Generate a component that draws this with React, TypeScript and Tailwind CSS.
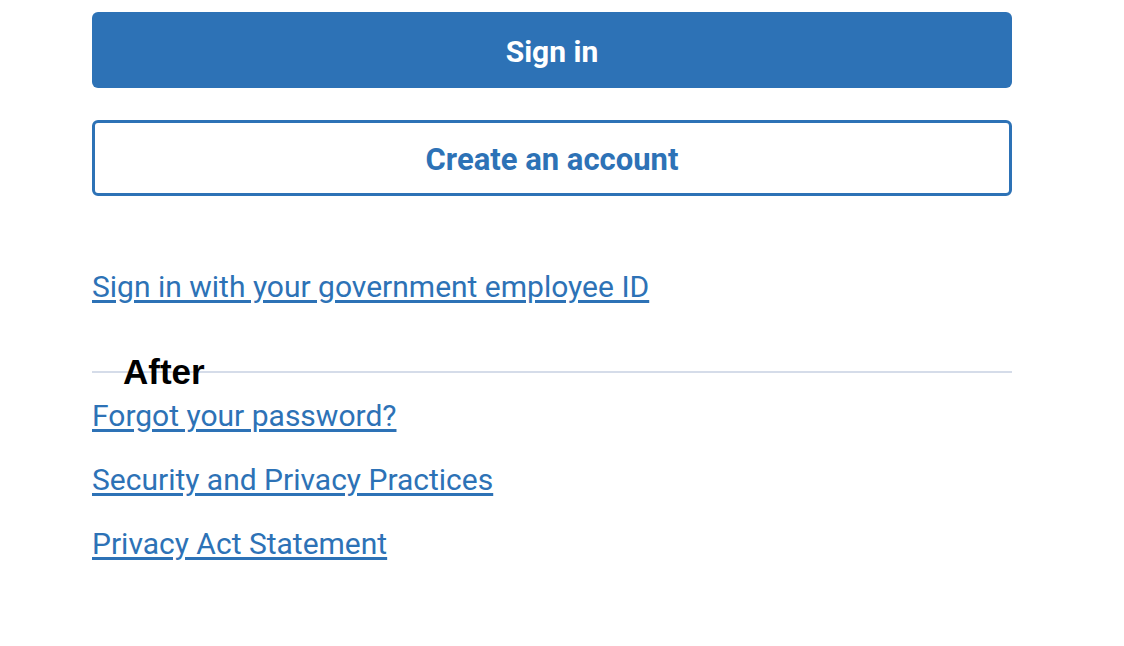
const links = ['Forgot your password?', 'Security and Privacy Practices', 'Privacy Act Statement'];

export default function App() {
  return (
    <div className="min-h-[646px] bg-white font-['Roboto',sans-serif]">
      <div className="w-[920px] ml-[92px] pt-[12px]">
        <button className="flex h-[76px] w-full items-center justify-center rounded-[6px] bg-[#2d72b6] pt-[2px] text-[30px] font-bold text-white">
          Sign in
        </button>
        <button className="mt-[32px] flex h-[76px] w-full items-center justify-center rounded-[6px] border-[3px] border-[#2d72b6] bg-white pt-[4px] text-[31px] font-bold text-[#2d72b6]">
          Create an account
        </button>

        <a href="#" className="mt-[71px] block text-[30px] leading-[40px] text-[#2d72b6] underline underline-offset-[3px]">
          Sign in with your government employee ID
        </a>

        <div className="relative mt-[64px] border-t-2 border-[#d5dce9]">
          <span className="absolute left-[31px] top-[-19px] font-['Liberation_Sans',sans-serif] text-[35px] font-bold leading-none text-black">
            After
          </span>
        </div>

        <div className="mt-[23px] flex flex-col gap-[24px]">
          {links.map((label) => (
            <a key={label} href="#" className="block text-[30px] leading-[40px] text-[#2d72b6] underline underline-offset-[3px]">
              {label}
            </a>
          ))}
        </div>
      </div>
    </div>
  );
}
